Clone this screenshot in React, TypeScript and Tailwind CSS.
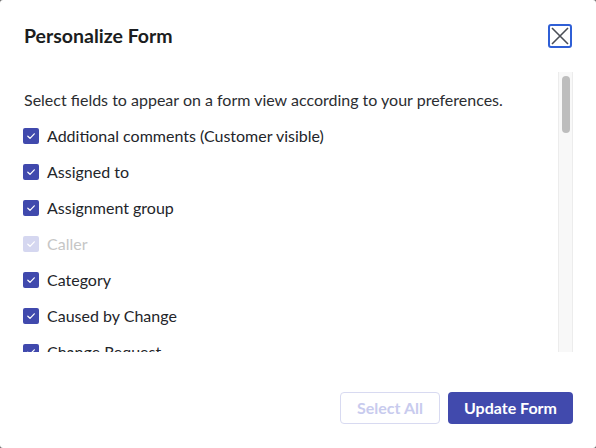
import React from "react";

const items: { label: string; disabled?: boolean }[] = [
  { label: "Additional comments (Customer visible)" },
  { label: "Assigned to" },
  { label: "Assignment group" },
  { label: "Caller", disabled: true },
  { label: "Category" },
  { label: "Caused by Change" },
  { label: "Change Request" },
  { label: "Close code" },
];

function Check({ disabled }: { disabled?: boolean }) {
  return (
    <span
      className={
        "flex h-4 w-4 shrink-0 items-center justify-center rounded-[2px] " +
        (disabled ? "bg-[#d5d7f0]" : "bg-[#4049ad]")
      }
    >
      <svg width="10" height="10" viewBox="0 0 10 10" fill="none">
        <path d="M1.8 5.2 L4 7.3 L8.3 2.8" stroke="white" strokeWidth="1.2" strokeLinecap="round" strokeLinejoin="round" />
      </svg>
    </span>
  );
}

export default function App() {
  return (
    <div className="h-[448px] w-[596px] bg-[#6b6b6b]" style={{ fontFamily: "Lato, 'Open Sans', sans-serif" }}>
      <div className="flex h-full w-full flex-col rounded-[3px] bg-white">
        <div className="flex h-[72px] items-start justify-between pl-6 pr-6 pt-6">
          <h1 className="text-[19.5px] font-bold leading-6 text-[#1b1d20]">Personalize Form</h1>
          <button className="flex h-6 w-6 items-center justify-center rounded-[3px] border-2 border-[#2f5fd6]">
            <svg width="20" height="20" viewBox="0 0 20 20" fill="none">
              <path d="M2 2 L18 18 M18 2 L2 18" stroke="#4a4e56" strokeWidth="1.6" />
            </svg>
          </button>
        </div>
        <div className="relative h-[280px] overflow-hidden">
          <div className="pl-6 pt-4 pr-10">
            <p className="text-[16px] leading-6 text-[#2b2d31]">
              Select fields to appear on a form view according to your preferences.
            </p>
            <div className="mt-3 flex flex-col gap-3">
              {items.map((it) => (
                <label key={it.label} className="flex h-6 items-center gap-2">
                  <span className="-ml-px">
                    <Check disabled={it.disabled} />
                  </span>
                  <span className={"text-[16px] leading-6 " + (it.disabled ? "text-[#c6c6c6]" : "text-[#23252a]")}>
                    {it.label}
                  </span>
                </label>
              ))}
            </div>
          </div>
          <div className="absolute right-[23px] top-0 h-[280px] w-[15px] border-x border-[#ececec] bg-[#f8f8f8]">
            <div className="ml-[3px] mt-1 h-[57px] w-2 rounded-full bg-[#bdbdbd]" />
          </div>
        </div>
        <div className="flex flex-1 items-start justify-end gap-2 pr-[23px] pt-10">
          <button className="h-[32px] w-[100px] rounded-[4px] border border-[#d8daf1] text-[16px] font-bold text-[#c8cbee]">
            Select All
          </button>
          <button className="h-[32px] w-[125px] rounded-[4px] bg-[#414aad] text-[16px] font-bold text-white">
            Update Form
          </button>
        </div>
      </div>
    </div>
  );
}
